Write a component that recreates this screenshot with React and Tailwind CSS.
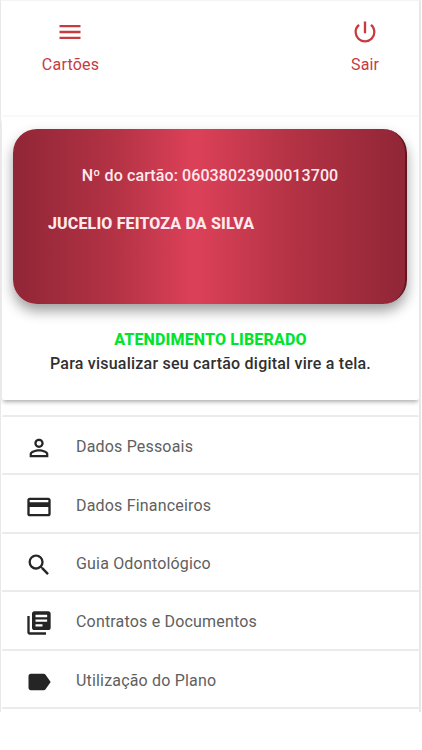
import React from "react";
import {
  MdCreditCard,
  MdLabel,
  MdLibraryBooks,
  MdMenu,
  MdPersonOutline,
  MdPowerSettingsNew,
  MdSearch,
} from "react-icons/md";

const menuItems = [
  { label: "Dados Pessoais", icon: MdPersonOutline },
  { label: "Dados Financeiros", icon: MdCreditCard },
  { label: "Guia Odontológico", icon: MdSearch },
  { label: "Contratos e Documentos", icon: MdLibraryBooks },
  { label: "Utilização do Plano", icon: MdLabel },
];

const Header = () => (
  <header className="flex h-[116px] items-start justify-between border-b-2 border-[#f9f9f9] pt-[17px] pr-[36px] pl-[36px] text-[#c93a3f]">
    <button className="flex w-16 flex-col items-center">
      <MdMenu size={28} />
      <span className="mt-[7px] pl-px text-base leading-6 tracking-[0.2px]">Cartões</span>
    </button>
    <button className="flex w-9 flex-col items-center">
      <MdPowerSettingsNew size={28} />
      <span className="mt-[7px] text-base leading-6 tracking-[0.1px]">Sair</span>
    </button>
  </header>
);

const MemberCard = () => (
  <div className="mr-3 ml-[11px] mt-3 h-[175px] rounded-[24px] border-r-2 border-[#641522] bg-[linear-gradient(90deg,#902636_0%,#b53345_27%,#da4058_45%,#da4058_48%,#b53345_70%,#902636_100%)] text-[#ffe9ec] shadow-[0_7px_13px_rgba(0,0,0,0.38)]">
    <p className="pt-[35px] pl-[2px] text-center text-base leading-6 font-medium tracking-[0.1px]">
      Nº do cartão: 06038023900013700
    </p>
    <p className="mt-6 pl-[35px] text-base leading-6 font-extrabold tracking-[0.15px]">
      JUCELIO FEITOZA DA SILVA
    </p>
  </div>
);

const App = () => {
  return (
    <div className="h-[750px] w-[422px] overflow-hidden bg-white font-['Roboto',sans-serif]">
      <div className="h-[712px] w-[421px] overflow-hidden border-t border-r-2 border-l border-t-[#f4f4f4] border-r-[#e8e8e8] border-l-[#e8e8e8] pl-px">
        <Header />

        <section className="h-[283px] overflow-hidden rounded-b-[2px] shadow-[0_3px_4px_-1px_rgba(0,0,0,0.32)]">
          <MemberCard />
          <div className="mt-6 text-center text-base leading-6">
            <p className="font-extrabold tracking-[0.15px] text-[#00e52c]">
              ATENDIMENTO LIBERADO
            </p>
            <p className="font-medium tracking-[0.22px] text-[#303030]">
              Para visualizar seu cartão digital vire a tela.
            </p>
          </div>
        </section>

        {/* Menu */}
        <nav className="mt-[15px] rounded-t-[2px] border-t-2 border-[#ebebeb]">
          {menuItems.map(({ label, icon: Icon }) => (
            <a
              key={label}
              className="flex h-[58.4px] items-center border-b-2 border-[#ebebeb] pl-[23px] text-[#252525]"
            >
              <Icon size={28} className="mt-[6px]" />
              <span className="mt-1 ml-[23px] text-base leading-6 tracking-[0.18px] text-[#606060]">
                {label}
              </span>
            </a>
          ))}
        </nav>
      </div>
    </div>
  );
};

export default App;
